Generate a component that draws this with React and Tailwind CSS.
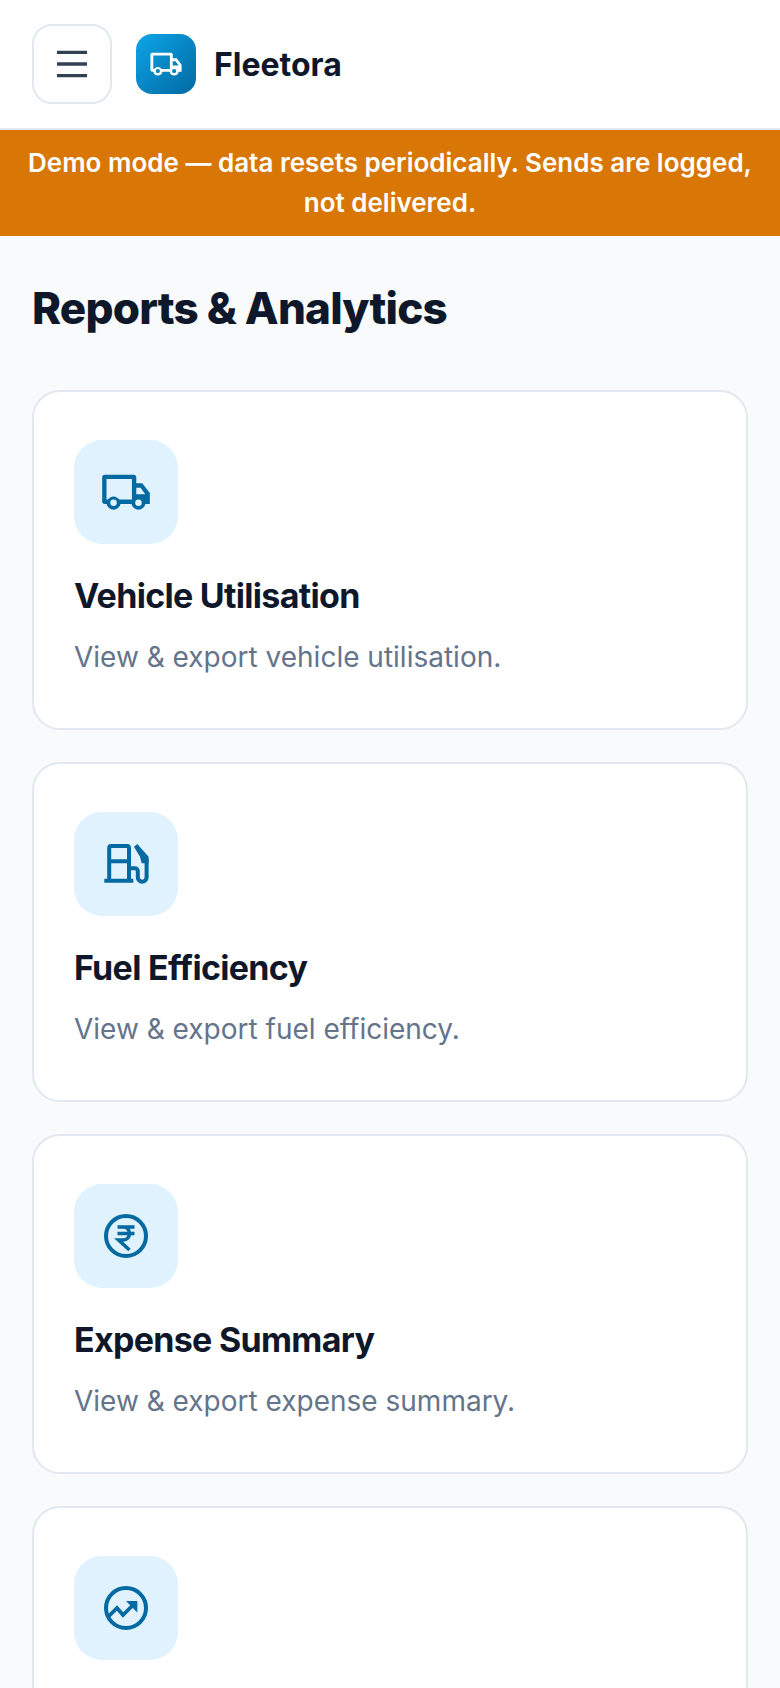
const font = { fontFamily: "Inter, sans-serif" };

function TruckIcon({ className }) {
  return (
    <svg viewBox="0 0 48 48" className={className} fill="currentColor">
      <path fillRule="evenodd" d="M2 10.500A2.500 2.500 0 0 1 4.500 8H31a2.500 2.500 0 0 1 2.500 2.500V16H39l7 9v10h-4.100a6.500 6.500 0 0 1-12.800 0H18.900a6.500 6.500 0 0 1-12.800 0H4.500A2.500 2.500 0 0 1 2 32.500ZM6 12v19h1.200a6.500 6.500 0 0 1 10.600 0h11.700V12Zm27.500 8v6h8.300L37.500 20ZM12.500 31a3 3 0 1 0 0 6 3 3 0 0 0 0-6Zm23 0a3 3 0 1 0 0 6 3 3 0 0 0 0-6Z" />
    </svg>
  );
}

function FuelIcon({ className }) {
  return (
    <svg viewBox="0 0 48 48" className={className} fill="none" stroke="currentColor" strokeWidth="4">
      <path d="M7.200 40V8a2 2 0 0 1 2-2H25a2 2 0 0 1 2 2v32M7 21.300h20M2.300 40.700h29" />
      <path d="M27 28.300h6a2.800 2.800 0 0 1 2.800 2.800v6.200a4.400 4.400 0 0 0 8.800 0V19" />
      <path d="M32 6.700 35.300 4 46.600 16.700V23.300H39.700L38 16.700Z" fill="currentColor" stroke="none" />
    </svg>
  );
}

function RupeeIcon({ className }) {
  return (
    <svg viewBox="0 0 48 48" className={className} fill="none" stroke="currentColor">
      <circle cx="24" cy="24" r="20" strokeWidth="4" />
      <path d="M15.500 15h17M15.500 21.500h17M19 15h2.500a6 6.500 0 0 1 0 13H16.500L27.500 38" strokeWidth="3.500" />
    </svg>
  );
}

function TrendIcon({ className }) {
  return (
    <svg viewBox="0 0 48 48" className={className} fill="none" stroke="currentColor">
      <circle cx="24" cy="24" r="20" strokeWidth="4" />
      <path d="M7 32 15 24 21 31 31 21" strokeWidth="3.800" />
      <path d="M24 17H35.300V28.500Z" fill="currentColor" stroke="none" />
    </svg>
  );
}

const reports = [
  { title: "Vehicle Utilisation", text: "View & export vehicle utilisation.", Icon: TruckIcon, size: "h-[52px] w-[52px]" },
  { title: "Fuel Efficiency", text: "View & export fuel efficiency.", Icon: FuelIcon, size: "h-12 w-12" },
  { title: "Expense Summary", text: "View & export expense summary.", Icon: RupeeIcon, size: "h-12 w-12" },
  { Icon: TrendIcon, size: "h-12 w-12" },
];

export default function App() {
  return (
    <div className="h-[1688px] overflow-hidden bg-[#f8fafc]" style={font}>
      <header className="flex h-[130px] items-center border-b-2 border-[#e2e8f0] bg-white px-8">
        <button className="flex h-20 w-20 items-center justify-center rounded-[20px] border-2 border-[#e2e8f0] bg-white">
          <svg viewBox="0 0 30 30" className="h-[30px] w-[30px] text-[#334155]" stroke="currentColor" strokeWidth="3.300">
            <path d="M0 3.300h30M0 15h30M0 26.700h30" />
          </svg>
        </button>
        <div className="ml-6 flex h-[60px] w-[60px] items-center justify-center rounded-2xl bg-gradient-to-br from-[#0ea5e9] to-[#0369a1]">
          <TruckIcon className="h-[34px] w-[34px] text-white" />
        </div>
        <span className="ml-[18px] pt-0.5 text-[32px] font-bold text-[#0f172a]">Fleetora</span>
      </header>

      <div className="bg-[#d97706] px-6 py-[13px] text-center text-[26px] leading-[40px] font-semibold text-white">
        Demo mode — data resets periodically. Sends are logged, not delivered.
      </div>

      <main className="px-8 pt-[42px]">
        <h1 className="text-[44px] leading-[60px] font-extrabold tracking-[-0.8px] text-[#0f172a]">Reports &amp; Analytics</h1>
        <div className="mt-[52px] flex flex-col gap-8">
          {reports.map(({ title, text, Icon, size }, i) => (
            <div key={i} className="h-[340px] rounded-[28px] border-2 border-[#e2e8f0] bg-white px-10 pt-12">
              <div className="flex h-[104px] w-[104px] items-center justify-center rounded-[28px] bg-[#e0f2fe]">
                <Icon className={`${size} text-[#0369a1]`} />
              </div>
              {title && (
                <>
                  <h2 className="mt-7 text-[34px] leading-[48px] font-bold tracking-[-0.7px] text-[#0f172a]">{title}</h2>
                  <p className="mt-4 text-[28px] leading-[42px] text-[#64748b]">{text}</p>
                </>
              )}
            </div>
          ))}
        </div>
      </main>
    </div>
  );
}
